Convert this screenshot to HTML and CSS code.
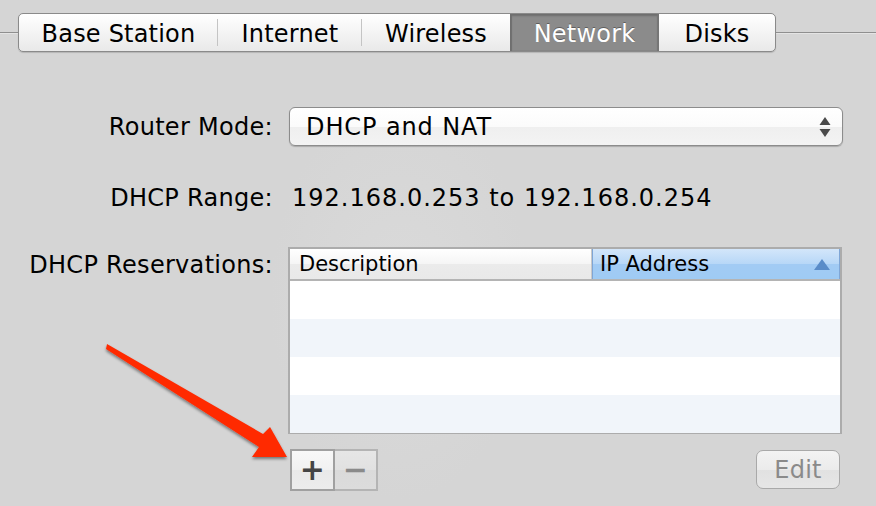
FILE: index.html
```html
<!DOCTYPE html>
<html>
    <head>
        <meta charset="utf-8">
        <title>Network</title>
        <link rel="stylesheet" href="styles.css">
    </head>
    <body>
        <div class="tabbar">
            <ul class="tabs">
                <li class="tab t1">Base Station</li>
                <li class="tab t2">Internet</li>
                <li class="tab t3">Wireless</li>
                <li class="tab t4 active">Network</li>
                <li class="tab t5">Disks</li>
            </ul>
        </div>

        <div class="row row-mode">
            <label class="lbl">Router Mode:</label>
            <div class="select">
                <span>DHCP and NAT</span>
                <svg class="updown" width="12" height="22" viewBox="0 0 12 22">
                    <path d="M6 1 L11.5 9 L0.5 9 Z" fill="#4a4a4a"/>
                    <path d="M6 21 L11.5 13 L0.5 13 Z" fill="#4a4a4a"/>
                </svg>
            </div>
        </div>

        <div class="row row-range">
            <label class="lbl">DHCP Range:</label>
            <span class="value">192.168.0.253 to 192.168.0.254</span>
        </div>

        <div class="row row-res">
            <label class="lbl">DHCP Reservations:</label>
            <div class="table">
                <div class="thead">
                    <div class="th desc">Description</div>
                    <div class="th ip">IP Address
                        <svg class="sort" width="16" height="11" viewBox="0 0 16 11"><path d="M8 0 L16 11 L0 11 Z" fill="#5a8cc8"/></svg>
                    </div>
                </div>
                <div class="tr"></div>
                <div class="tr alt"></div>
                <div class="tr"></div>
                <div class="tr alt"></div>
            </div>
        </div>

        <div class="row row-btns">
            <div class="segs">
                <span class="seg plus">+</span>
                <span class="seg minus">&minus;</span>
            </div>
            <span class="edit">Edit</span>
        </div>

        <svg class="arrow" width="876" height="506" viewBox="0 0 876 506">
            <defs>
                <filter id="sh" x="-10%" y="-10%" width="130%" height="130%">
                    <feGaussianBlur in="SourceAlpha" stdDeviation="1.5"/>
                    <feOffset dx="0" dy="2"/>
                    <feComponentTransfer><feFuncA type="linear" slope="0.45"/></feComponentTransfer>
                    <feMerge><feMergeNode/><feMergeNode in="SourceGraphic"/></feMerge>
                </filter>
            </defs>
            <polygon filter="url(#sh)" fill="#ff2a00" points="107,344 263,434 270,427 287,457 252,457 259,447 106,349"/>
        </svg>
    </body>
</html>
```

FILE: styles.css
```css
body{
    margin:0;
    padding:0;
    width:876px;
    height:506px;
    overflow:hidden;
    position:relative;
    background:#d5d5d5 radial-gradient(ellipse 130px 200px at 400px 300px, #dadada, #d5d5d5);
    font:24px/1 "DejaVu Sans", "Liberation Sans", sans-serif;
    letter-spacing:0.2px;
    color:#000;
}
ul{
    list-style-type:none;
    margin:0;
    padding:0;
}
.tabbar{
    margin-top:13px;
    height:41px;
    background:linear-gradient(#d5d5d5 19px, #8f8f8f 19px, #8f8f8f 20px, #e4e4e4 20px, #e4e4e4 21px, #d5d5d5 21px);
}
.tabs{
    display:flex;
    margin-left:18px;
    width:756px;
    height:37px;
    border:1px solid #8a8a8a;
    border-radius:5px;
    overflow:hidden;
    background:linear-gradient(#ffffff, #f4f4f4 50%, #e9e9e9);
    box-shadow:0 1px 1px rgba(0,0,0,0.15);
}
.tab{
    position:relative;
    display:flex;
    align-items:center;
    justify-content:center;
    height:37px;
    padding-top:3px;
    box-sizing:border-box;
}
.t1{width:199px;}
.t2{width:144px;}
.t3{width:148px;}
.t4{width:149px;}
.t5{width:116px;}
.t1:after,.t2:after{
    content:"";
    position:absolute;
    right:0;
    top:5px;
    bottom:5px;
    width:1px;
    background:#c4c4c4;
}
.tab.active{
    color:#fff;
    background:#8b8b8b;
    box-shadow:inset 2px 0 1px #6f6f6f, inset -2px 0 1px #767676, inset 0 2px 2px #6e6e6e;
    text-shadow:0 -1px 0 #5e5e5e;
}

.row{
    display:flex;
    align-items:center;
}
.lbl{
    width:273px;
    text-align:right;
    flex:none;
    letter-spacing:0.3px;
}
.row-mode{
    margin-top:53px;
}
.select{
    margin-left:16px;
    width:554px;
    height:39px;
    box-sizing:border-box;
    border:1px solid #8c8c8c;
    border-radius:6px;
    background:linear-gradient(#ffffff, #fbfbfb 50%, #efefef 50%, #f3f3f3);
    box-shadow:0 1px 1px rgba(0,0,0,0.2);
    display:flex;
    align-items:center;
    justify-content:space-between;
    padding:0 11px 0 16px;
}
.select span{
    margin-top:1px;
    letter-spacing:0.9px;
}
.row-range{
    margin-top:37px;
    height:30px;
}
.value{
    margin-left:19px;
    letter-spacing:1px;
}
.row-res{
    margin-top:34px;
    align-items:flex-start;
}
.row-res .lbl{
    margin-top:6px;
}
.table{
    margin-left:15px;
    width:550px;
    border:2px solid #acacac;
    border-bottom-width:1px;
    background:#fff;
}
.thead{
    display:flex;
    height:30px;
    border-bottom:2px solid #b4b4b4;
    background:linear-gradient(#ffffff, #f5f5f5 50%, #ebebeb 50%, #e9e9e9);
}
.th{
    display:flex;
    align-items:center;
    font-size:21px;
    letter-spacing:0;
    height:30px;
}
.desc{
    width:292px;
    padding-left:9px;
    border-right:1px solid #c8c8c8;
}
.ip{
    flex:1;
    padding-left:8px;
    padding-right:10px;
    justify-content:space-between;
    background:linear-gradient(#d3e6fa, #b7d7f7 50%, #a2cbf4 50%, #9fcbf4);
    box-shadow:inset 1px 0 0 #7fa6d6, inset -1px 0 0 #7fa6d6;
}
.sort{
    margin-top:1px;
}
.tr{
    height:38px;
}
.tr.alt{
    background:#f1f5fa;
}
.row-btns{
    margin-top:15px;
    align-items:flex-start;
}
.segs{
    margin-left:290px;
    display:flex;
    height:42px;
}
.seg{
    width:41px;
    height:38px;
    display:flex;
    align-items:center;
    justify-content:center;
    font-size:30px;
    font-weight:bold;
}
.plus{
    border:2px solid #a0a0a0;
    color:#454545;
    background:linear-gradient(#f8f8f8, #f1f1f1 50%, #e9e9e9 50%, #ececec);
}
.minus{
    border:2px solid #b4b4b4;
    border-left:0;
    color:#8a8a8a;
    background:linear-gradient(#e6e6e6, #e1e1e1 50%, #dadada 50%, #dcdcdc);
}
.edit{
    margin-left:378px;
    margin-top:1px;
    width:82px;
    height:37px;
    border:1px solid #a9a9a9;
    border-radius:7px;
    display:flex;
    align-items:center;
    justify-content:center;
    color:#8a8a8a;
    background:linear-gradient(#f3f3f3, #ebebeb 50%, #e1e1e1 50%, #e6e6e6);
}
.arrow{
    position:absolute;
    left:0;
    top:0;
    pointer-events:none;
}
```
